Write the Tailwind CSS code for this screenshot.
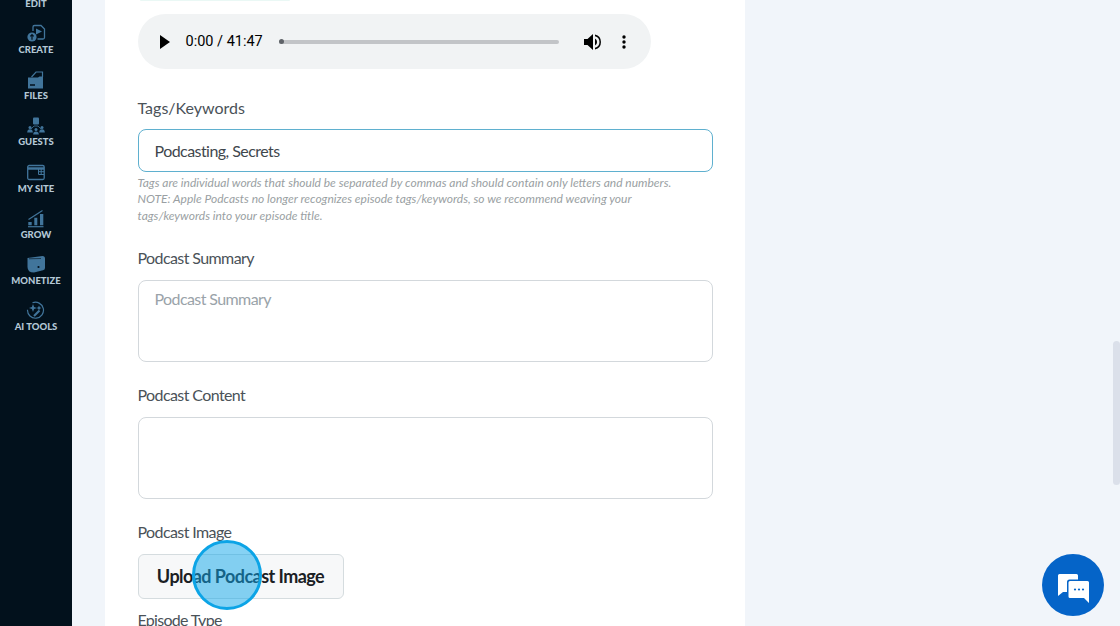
<!DOCTYPE html>
<html lang="en">
<head>
    <meta charset="UTF-8">
    <meta name="viewport" content="width=device-width, initial-scale=1.0">
    <title>Edit Episode</title>
    <script src="https://cdn.jsdelivr.net/npm/@tailwindcss/browser@4"></script>
</head>
<body class="bg-[#f1f5fa] font-['Lato','Noto_Sans',sans-serif] overflow-hidden">
<div class="flex h-[626px] w-[1120px] overflow-hidden">
    <!-- Sidebar -->
    <nav class="w-[72px] h-full shrink-0 bg-[#02111c] flex flex-col items-center overflow-hidden text-[9.5px] leading-3 font-black text-[#b4c8d6]">
        <span class="-mt-[2px] mb-[14px]">EDIT</span>
        <div class="h-[46.2px] flex flex-col items-center">
            <svg class="w-[20px] h-[20px]" viewBox="0 0 20 20" fill="none">
                <path d="M7 7V3a1.500 1.500 0 0 1 1.500-1.500H15L18.500 5V13.500a1.500 1.500 0 0 1-1.500 1.500H11.500" stroke="#41759b" stroke-width="1.300"/>
                <path d="M10 4.500v6l6-3z" fill="#41759b"/>
                <circle cx="6" cy="13" r="4.600" fill="#41759b"/>
                <path d="M6 15.800v-5M4.300 12.300L6 10.600l1.700 1.700" stroke="#02111c" stroke-width="1.200"/>
            </svg>
            <span>CREATE</span>
        </div>
        <div class="h-[46.2px] flex flex-col items-center">
            <svg class="w-[20px] h-[20px]" viewBox="0 0 20 20" fill="none">
                <path d="M5.500 7l4.500-5h6.500v5" stroke="#41759b" stroke-width="1.200"/>
                <path d="M2 7.500h10l1.500-1h3.500v12H2z" fill="#41759b"/>
                <path d="M4 15h5" stroke="#02111c" stroke-width="1.500"/>
            </svg>
            <span>FILES</span>
        </div>
        <div class="h-[46.2px] flex flex-col items-center">
            <svg class="w-[20px] h-[20px]" viewBox="0 0 20 20" fill="#41759b">
                <rect x="7" y="1.500" width="6" height="7" rx="1"/>
                <path d="M5 13l3-3h4l3 3" fill="none" stroke="#41759b" stroke-width="0.800"/>
                <circle cx="4" cy="11.500" r="1.500"/>
                <path d="M1.200 16.500c0-2.200 1.200-3.200 2.800-3.200s2.800 1 2.800 3.200z"/>
                <circle cx="16" cy="11.500" r="1.500"/>
                <path d="M13.200 16.500c0-2.200 1.200-3.200 2.800-3.200s2.800 1 2.800 3.200z"/>
                <circle cx="10" cy="13.500" r="1.500"/>
                <path d="M7.200 18.500c0-2.200 1.200-3 2.800-3s2.800.8 2.800 3z"/>
            </svg>
            <span>GUESTS</span>
        </div>
        <div class="h-[46.2px] flex flex-col items-center">
            <svg class="w-[20px] h-[20px]" viewBox="0 0 20 20" fill="none">
                <rect x="1.700" y="2.500" width="16.500" height="14" rx="1.500" stroke="#41759b" stroke-width="1.300"/>
                <path d="M2 5.500h16" stroke="#41759b" stroke-width="2.500"/>
                <path d="M12.500 6v5.500h5.500M12.500 8.700h5.500M15.200 6v5.500" stroke="#41759b" stroke-width="1"/>
            </svg>
            <span>MY SITE</span>
        </div>
        <div class="h-[46.2px] flex flex-col items-center">
            <svg class="w-[20px] h-[20px]" viewBox="0 0 20 20" fill="none">
                <path d="M2.500 10.500L16.500 1.500" stroke="#41759b" stroke-width="1.200"/>
                <path d="M2 17.700h15.500" stroke="#41759b" stroke-width="1.200"/>
                <path d="M2.300 13h3.400v3.300H2.300zM8.300 8.700h3v7.600h-3zM14 5h3.300v11.300H14z" fill="#41759b"/>
            </svg>
            <span>GROW</span>
        </div>
        <div class="h-[46.2px] flex flex-col items-center">
            <svg class="w-[20px] h-[20px]" viewBox="0 0 20 20" fill="#41759b">
                <path d="M1.500 3L16.500 1q2.500 0 2.500 2.500V13q0 2-2 2.200L8 17.500Q1.500 17.500 1.500 12z"/>
                <path d="M3 3.800L15 3.500" stroke="#02111c" stroke-width="0.600"/>
                <circle cx="12.500" cy="12" r="1.100" fill="#02111c"/>
            </svg>
            <span>MONETIZE</span>
        </div>
        <div class="flex flex-col items-center">
            <svg class="w-[20px] h-[20px]" viewBox="0 0 20 20" fill="none">
                <path d="M6.500 1.800a8 8 0 1 1-5 7" stroke="#41759b" stroke-width="1.200"/>
                <path d="M7 3l1.100 2.900L11 7 8.100 8.100 7 11 5.900 8.100 3 7l2.900-1.100z" fill="#41759b"/>
                <path d="M8 15l5.500-5.500" stroke="#41759b" stroke-width="2.200"/>
                <path d="M13 4.500l.8 1.700 1.700.8-1.700.8-.8 1.700-.8-1.700-1.700-.8 1.700-.8z" fill="#41759b"/>
            </svg>
            <span>AI TOOLS</span>
        </div>
    </nav>

    <!-- Main -->
    <main class="flex-1 relative pl-[33px] min-w-0">
        <div class="w-[640px] h-full bg-white px-[32.5px] overflow-hidden text-[#3f474d]">
            <div class="w-[150px] h-[1px] bg-[#eaf8f5] rounded-b-md ml-[2px] mb-[13px]"></div>

            <!-- audio player -->
            <div class="w-[513px] h-[55px] rounded-full bg-[#f1f3f4] flex items-center pl-[21px] pr-[21px] text-black font-['Roboto',sans-serif]">
                <svg class="w-[12px] h-[14px] shrink-0" viewBox="0 0 12 14" fill="#000"><path d="M1 0l10 7-10 7z"/></svg>
                <span class="ml-[15px] text-[14.5px] whitespace-nowrap w-[77px]">0:00 / 41:47</span>
                <div class="ml-[16px] w-[280px] h-[4px] rounded-full bg-[#c2c4c7] relative">
                    <span class="absolute left-0 -top-[0.5px] w-[5px] h-[5px] rounded-full bg-[#5f6368]"></span>
                </div>
                <svg class="ml-[24px] w-[18px] h-[18px] shrink-0" viewBox="0 0 18 18" fill="#000">
                    <path d="M1 6v6h3.500L10 17V1L4.500 6z"/>
                    <path d="M12 5.500v7a4 4 0 0 0 0-7z"/>
                    <path d="M12 1.500v1.700a6 6 0 0 1 0 11.600v1.700a7.700 7.700 0 0 0 0-15z"/>
                </svg>
                <svg class="ml-[21px] w-[4px] h-[14px] shrink-0" viewBox="0 0 4 14" fill="#000">
                    <circle cx="2" cy="2" r="1.700"/><circle cx="2" cy="7" r="1.700"/><circle cx="2" cy="12" r="1.700"/>
                </svg>
            </div>

            <label class="block mt-[29px] text-[16px] leading-[20px] text-[#4a5258]">Tags/Keywords</label>
            <div class="mt-[11px] w-[575px] h-[43px] rounded-[8px] border-[1.5px] border-[#5fb0cf] pl-[16px] flex items-center text-[16px] tracking-[-0.55px] text-[#3f474d]">Podcasting, Secrets</div>
            <p class="mt-[3px] w-[575px] text-[12px] leading-[16.25px] italic text-[#9a9fa3]">Tags are individual words that should be separated by commas and should contain only letters and numbers.<br>NOTE: Apple Podcasts no longer recognizes episode tags/keywords, so we recommend weaving your<br>tags/keywords into your episode title.</p>

            <label class="block mt-[24px] text-[16px] leading-[20px] tracking-[-0.6px] text-[#4a5258]">Podcast Summary</label>
            <div class="mt-[12px] w-[575px] h-[82px] rounded-[8px] border-[1.5px] border-[#d3d8dc] pl-[16px] pt-[8px] text-[16px] leading-[20px] tracking-[-0.6px] text-[#9aa3a9]">Podcast Summary</div>

            <label class="block mt-[23px] text-[16px] leading-[20px] tracking-[-0.6px] text-[#4a5258]">Podcast Content</label>
            <div class="mt-[12px] w-[575px] h-[82px] rounded-[8px] border-[1.5px] border-[#d3d8dc]"></div>

            <label class="block mt-[23px] text-[16px] leading-[20px] tracking-[-0.6px] text-[#4a5258]">Podcast Image</label>
            <button class="mt-[12px] block w-[206px] h-[45px] rounded-[6px] border-[1.5px] border-[#d5dcdf] bg-[#f7f8f9] text-[18px] tracking-[-0.55px] font-bold text-[#1a2024]">Upload Podcast Image</button>
            <label class="block mt-[11px] text-[16px] leading-[20px] tracking-[-0.7px] text-[#4a5258]">Episode Type</label>
        </div>

        <!-- click highlight -->
        <div class="absolute left-[120px] top-[540px] w-[70px] h-[70px] rounded-full bg-[#0ea5e9]/50 border-[3px] border-[#0ca4e6]"></div>

        <!-- scrollbar -->
        <div class="absolute right-0 top-[341px] w-[7px] h-[144px] rounded-full bg-[#dbe0ea]"></div>

        <!-- chat button -->
        <div class="absolute left-[970px] top-[554px] w-[62px] h-[62px] rounded-full bg-[#0564c8] flex items-center justify-center">
            <svg class="w-[31px] h-[29px] mt-[7px]" viewBox="0 0 31 29" fill="#fff">
                <path d="M1.500 0h17a1.500 1.500 0 0 1 1.500 1.500V5.500H11.500A2.500 2.500 0 0 0 9 8v10H5l-5 4V1.500A1.500 1.500 0 0 1 1.500 0z"/>
                <path d="M12 7h17.500a1.500 1.500 0 0 1 1.500 1.500V29l-5-5H12a1.500 1.500 0 0 1-1.500-1.500v-14A1.500 1.500 0 0 1 12 7z"/>
                <circle cx="17" cy="15.500" r="1.100" fill="#0564c8"/><circle cx="21" cy="15.500" r="1.100" fill="#0564c8"/><circle cx="25" cy="15.500" r="1.100" fill="#0564c8"/>
            </svg>
        </div>
    </main>
</div>
</body>
</html>
